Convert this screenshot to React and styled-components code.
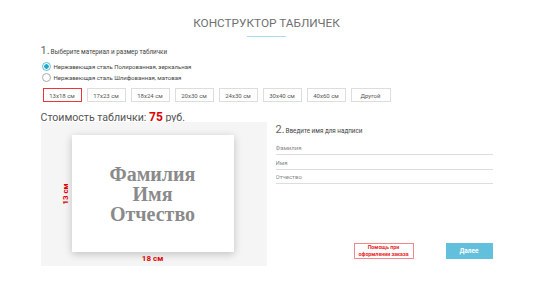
import React from 'react';
import styled, { createGlobalStyle } from 'styled-components';

const GlobalStyle = createGlobalStyle`
  body {
    margin: 0;
    background: #fff;
    font-family: Roboto, "Liberation Sans", sans-serif;
    color: #333;
  }
`;

const sizes = ['13x18 см', '17x23 см', '18x24 см', '20x30 см', '24x30 см', '30x40 см', '40x60 см', 'Другой'];

const App = () => {
  return (
    <>
      <GlobalStyle />
      <Page>
        <Title>КОНСТРУКТОР ТАБЛИЧЕК</Title>
        <TitleLine />

        <StepHeading>
          <Num>1.</Num> Выберите материал и размер таблички
        </StepHeading>

        <Radios>
          <RadioRow>
            <RadioDot $checked />
            Нержавеющая сталь Полированная, зеркальная
          </RadioRow>
          <RadioRow>
            <RadioDot />
            Нержавеющая сталь Шлифованная, матовая
          </RadioRow>
        </Radios>

        <SizeRow>
          {sizes.map((s, i) => (
            <SizeButton key={s} $active={i === 0}>{s}</SizeButton>
          ))}
        </SizeRow>

        <Price>
          Стоимость таблички: <PriceValue>75</PriceValue> руб.
        </Price>

        <Columns>
          <Preview>
            <Plate>
              <PlateText>
                <PlateLine>Фамилия</PlateLine>
                <PlateLine>Имя</PlateLine>
                <PlateLine>Отчество</PlateLine>
              </PlateText>
              <HeightLabel>13 см</HeightLabel>
              <WidthLabel>18 см</WidthLabel>
            </Plate>
          </Preview>

          <FormCol>
            <StepHeading $tight>
              <Num>2.</Num> Введите имя для надписи
            </StepHeading>
            <Inputs>
              <Field placeholder="Фамилия" />
              <Field placeholder="Имя" />
              <Field placeholder="Отчество" />
            </Inputs>
            <Actions>
              <HelpButton>Помощь при<br />оформлении заказа</HelpButton>
              <NextButton>Далее</NextButton>
            </Actions>
          </FormCol>
        </Columns>
      </Page>
    </>
  );
};

export default App;

const Page = styled.div`
  width: 452px;
  margin: 0 auto;
  padding-top: 15px;
`;

const Title = styled.h1`
  margin: 0;
  text-align: center;
  font-size: 11.8px;
  font-weight: 400;
  color: #707070;
  line-height: 16px;
`;

const TitleLine = styled.div`
  width: 39px;
  height: 1px;
  background: #a9dbea;
  margin: 5px auto 0;
`;

const StepHeading = styled.div`
  margin-top: ${(p) => (p.$tight ? '0' : '7px')};
  font-size: 6.3px;
  color: #444;
  line-height: 14px;
  display: flex;
  align-items: baseline;
  gap: 1px;
`;

const Num = styled.span`
  font-size: 11px;
  color: #666;
`;

const Radios = styled.div`
  margin-top: 3px;
  display: flex;
  flex-direction: column;
  gap: 3px;
`;

const RadioRow = styled.label`
  display: flex;
  align-items: center;
  gap: 3px;
  font-size: 6px;
  color: #444;
  height: 8px;
  margin-left: 1px;
`;

const RadioDot = styled.span`
  width: 7px;
  height: 7px;
  border-radius: 50%;
  border: 1px solid ${(p) => (p.$checked ? '#5bc0de' : '#aaa')};
  background: ${(p) => (p.$checked ? 'radial-gradient(circle, #1ea9cf 0 2px, #fff 2.5px)' : '#fff')};
`;

const SizeRow = styled.div`
  margin-top: 7px;
  margin-left: 2px;
  display: flex;
  gap: 5px;
`;

const SizeButton = styled.div`
  width: 37px;
  height: 12px;
  border: 1px solid ${(p) => (p.$active ? '#e8383b' : '#ddd')};
  background: #fff;
  display: flex;
  align-items: center;
  justify-content: center;
  font-size: 6px;
  color: #555;
  &:last-child {
    width: 38px;
  }
`;

const Price = styled.div`
  margin-top: 8px;
  font-size: 10.6px;
  color: #555;
  line-height: 14px;
`;

const PriceValue = styled.span`
  color: #e00000;
  font-weight: 700;
  font-size: 12px;
`;

const Columns = styled.div`
  display: flex;
  gap: 8px;
  margin-top: -3px;
`;

const Preview = styled.div`
  width: 226px;
  height: 144px;
  background: #f5f5f5;
  display: flex;
  justify-content: center;
  padding-top: 13px;
  box-sizing: border-box;
`;

const Plate = styled.div`
  position: relative;
  width: 162px;
  height: 117px;
  margin-right: 2px;
  background: #fff;
  box-shadow: 0 2px 8px rgba(0, 0, 0, 0.22);
  display: flex;
  align-items: center;
  justify-content: center;
`;

const PlateText = styled.div`
  display: flex;
  flex-direction: column;
  align-items: center;
  margin-top: 1px;
`;

const PlateLine = styled.div`
  font-family: "Liberation Serif", "Times New Roman", serif;
  font-weight: 700;
  font-size: 20px;
  line-height: 20px;
  height: 20px;
  color: #8a8a8a;
`;

const HeightLabel = styled.div`
  position: absolute;
  left: -7px;
  top: 50%;
  transform: translate(-50%, -50%) rotate(-90deg);
  color: #e00000;
  font-weight: 700;
  font-size: 8px;
  white-space: nowrap;
`;

const WidthLabel = styled.div`
  position: absolute;
  bottom: -11px;
  left: 50%;
  transform: translateX(-50%);
  color: #e00000;
  font-weight: 700;
  font-size: 8px;
  white-space: nowrap;
`;

const FormCol = styled.div`
  flex: 1;
  display: flex;
  flex-direction: column;
  padding-left: 1px;
  padding-top: 1px;
`;

const Inputs = styled.div`
  margin-top: 3px;
  display: flex;
  flex-direction: column;
`;

const Field = styled.input`
  border: none;
  border-bottom: 1px solid #ddd;
  outline: none;
  padding: 0;
  height: 13px;
  margin-bottom: 0.5px;
  font-family: Roboto, "Liberation Sans", sans-serif;
  font-size: 6px;
  background: transparent;
  &::placeholder {
    color: #888;
  }
`;

const Actions = styled.div`
  margin-top: 58px;
  display: flex;
  justify-content: flex-end;
  gap: 32px;
`;

const HelpButton = styled.div`
  width: 58px;
  height: 14px;
  border: 1px solid #f08a8a;
  color: #e8262b;
  font-size: 5.3px;
  font-weight: 700;
  line-height: 6.5px;
  text-align: center;
  display: flex;
  align-items: center;
  justify-content: center;
`;

const NextButton = styled.div`
  width: 47px;
  height: 16px;
  background: #62c0dd;
  color: #fff;
  font-size: 6.5px;
  font-weight: 700;
  display: flex;
  align-items: center;
  justify-content: center;
`;
